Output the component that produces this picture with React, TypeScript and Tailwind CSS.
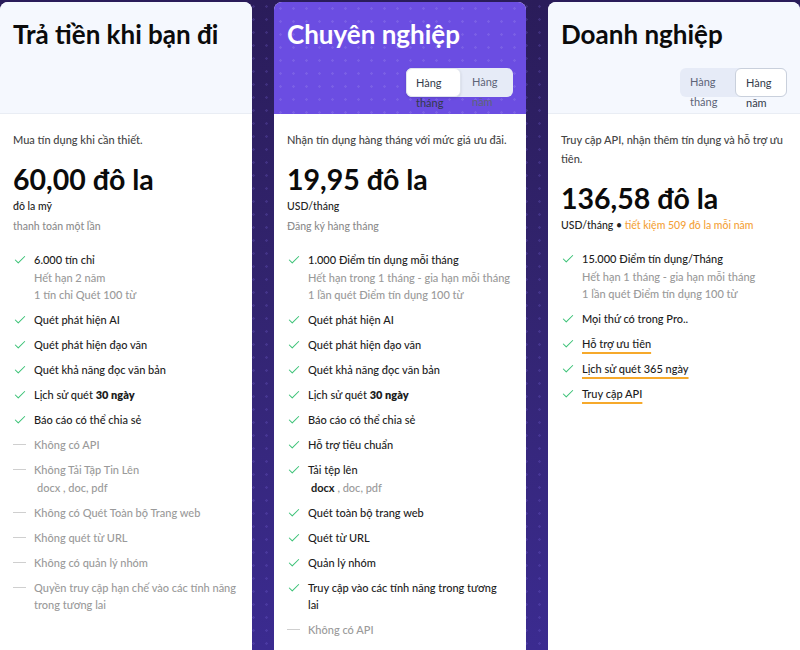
import React from 'react';
import { Check } from 'lucide-react';

type Item = {
  ok: boolean;
  text: React.ReactNode;
  sub?: React.ReactNode[];
  mark?: boolean;
  narrow?: boolean;
};

const font = { fontFamily: 'Lato, "Noto Sans", sans-serif' };

const Toggle: React.FC<{ active: 'month' | 'year' }> = ({ active }) => (
  <div className="flex justify-end mt-[18px]">
    <div className="flex w-[107px] h-[29px] rounded-md bg-[#e6ebf7] text-[11px] leading-[20px]">
      <div
        className={
          active === 'month'
            ? 'w-[55px] h-full pl-[9px] pr-[8px] pt-[4px] rounded-md bg-white border border-[#dfe4ee] shadow-sm text-[#333a4a]'
            : 'w-[55px] h-full pl-[10px] pr-[8px] pt-[4px] text-[#5d6478]'
        }
      >
        Hàng tháng
      </div>
      <div
        className={
          active === 'year'
            ? 'flex-1 h-full pl-[10px] pr-[8px] pt-[4px] rounded-md bg-white border border-[#c9d0dc] text-[#333a4a]'
            : 'flex-1 h-full pl-[11px] pr-[8px] pt-[4px] text-[#5d6478]'
        }
      >
        Hàng năm
      </div>
    </div>
  </div>
);

const FeatureList: React.FC<{ items: Item[] }> = ({ items }) => (
  <ul className="flex flex-col gap-[7.5px] mt-[17px]">
    {items.map((item, i) => (
      <li key={i} className="flex gap-[7px]">
        {item.ok ? (
          <Check className="w-[14px] h-[14px] mt-[2px] shrink-0 text-[#3cc277]" strokeWidth={1.8} />
        ) : (
          <span className="w-[14px] h-[17px] shrink-0 flex items-center">
            <span className="block w-[13px] h-px bg-[#cfcfcf]" />
          </span>
        )}
        <div className={item.narrow ? 'text-[11px] leading-[17.5px] max-w-[196px]' : 'text-[11px] leading-[17.5px]'}>
          <div
            className={
              item.ok
                ? item.mark
                  ? 'text-[#1c1c1c] font-medium underline decoration-[#f6a92b] decoration-2 underline-offset-[4px]'
                  : 'text-[#1c1c1c] font-medium'
                : 'text-[#9a9a9a] font-medium'
            }
          >
            {item.text}
          </div>
          {item.sub?.map((s, j) => (
            <div key={j} className="text-[#9a9a9a] font-medium">
              {s}
            </div>
          ))}
        </div>
      </li>
    ))}
  </ul>
);

type CardProps = {
  title: string;
  featured?: boolean;
  toggle?: 'month' | 'year';
  desc: string;
  price: string;
  unit: React.ReactNode;
  note?: string;
  items: Item[];
};

const Card: React.FC<CardProps> = ({ title, featured, toggle, desc, price, unit, note, items }) => (
  <div className="w-[252px] shrink-0 rounded-t-lg bg-white overflow-hidden">
    <div
      className={
        featured
          ? 'h-[112px] px-[13px] pt-[16px] bg-[#6b4de2] bg-[image:radial-gradient(circle,rgba(255,255,255,0.1)_1px,transparent_1.5px)] bg-[length:13px_13px]'
          : 'h-[112px] px-[13px] pt-[16px] bg-[#f5f8fe] border-b border-[#e9edf4]'
      }
    >
      <h2
        className={
          featured
            ? 'text-[26px] leading-[32px] font-bold text-white'
            : 'text-[26px] leading-[32px] font-bold text-[#0b0b0b]'
        }
      >
        {title}
      </h2>
      {toggle && <Toggle active={toggle} />}
    </div>
    <div className="px-[13px] pt-[16px] pb-6">
      <p className="text-[11px] leading-[19px] font-medium text-[#444]">{desc}</p>
      <div className="mt-[14px] text-[28.5px] leading-[32px] font-bold text-[#0b0b0b]">{price}</div>
      <div className="mt-[3px] text-[10.5px] leading-[16px] font-medium text-[#222]">{unit}</div>
      {note && <div className="mt-[4px] text-[10.5px] leading-[16px] font-medium text-[#8c8c8c]">{note}</div>}
      <FeatureList items={items} />
    </div>
  </div>
);

const App: React.FC = () => {
  const payg: Item[] = [
    { ok: true, text: '6.000 tín chỉ', sub: ['Hết hạn 2 năm', '1 tín chỉ Quét 100 từ'] },
    { ok: true, text: 'Quét phát hiện AI' },
    { ok: true, text: 'Quét phát hiện đạo văn' },
    { ok: true, text: 'Quét khả năng đọc văn bản' },
    { ok: true, text: <>Lịch sử quét <b className="font-extrabold">30 ngày</b></> },
    { ok: true, text: 'Báo cáo có thể chia sẻ' },
    { ok: false, text: 'Không có API' },
    { ok: false, text: 'Không Tải Tập Tin Lên', sub: [<span className="pl-[3px]">docx , doc, pdf</span>] },
    { ok: false, text: 'Không có Quét Toàn bộ Trang web' },
    { ok: false, text: 'Không quét từ URL' },
    { ok: false, text: 'Không có quản lý nhóm' },
    { ok: false, text: 'Quyền truy cập hạn chế vào các tính năng trong tương lai' },
  ];

  const pro: Item[] = [
    {
      ok: true,
      text: '1.000 Điểm tín dụng mỗi tháng',
      sub: ['Hết hạn trong 1 tháng - gia hạn mỗi tháng', '1 lần quét Điểm tín dụng 100 từ'],
    },
    { ok: true, text: 'Quét phát hiện AI' },
    { ok: true, text: 'Quét phát hiện đạo văn' },
    { ok: true, text: 'Quét khả năng đọc văn bản' },
    { ok: true, text: <>Lịch sử quét <b className="font-extrabold">30 ngày</b></> },
    { ok: true, text: 'Báo cáo có thể chia sẻ' },
    { ok: true, text: 'Hỗ trợ tiêu chuẩn' },
    {
      ok: true,
      text: 'Tải tệp lên',
      sub: [
        <span className="pl-[3px]">
          <b className="font-bold text-[#1c1c1c]">docx</b> , doc, pdf
        </span>,
      ],
    },
    { ok: true, text: 'Quét toàn bộ trang web' },
    { ok: true, text: 'Quét từ URL' },
    { ok: true, text: 'Quản lý nhóm' },
    { ok: true, text: 'Truy cập vào các tính năng trong tương lai', narrow: true },
    { ok: false, text: 'Không có API' },
  ];

  const biz: Item[] = [
    {
      ok: true,
      text: '15.000 Điểm tín dụng/Tháng',
      sub: ['Hết hạn 1 tháng - gia hạn mỗi tháng', '1 lần quét Điểm tín dụng 100 từ'],
    },
    { ok: true, text: 'Mọi thứ có trong Pro..' },
    { ok: true, text: 'Hỗ trợ ưu tiên', mark: true },
    { ok: true, text: 'Lịch sử quét 365 ngày', mark: true },
    { ok: true, text: 'Truy cập API', mark: true },
  ];

  return (
    <div
      style={font}
      className="w-[800px] h-[650px] overflow-hidden pt-[2px] bg-[#2f2170] bg-[image:radial-gradient(circle,rgba(130,110,230,0.22)_1px,transparent_1.5px),linear-gradient(180deg,#2a1c5a_0%,#32246f_45%,#3b2b90_100%)] bg-[length:13px_13px,100%_100%]"
    >
      <div className="flex gap-[22px]">
        <Card
          title="Trả tiền khi bạn đi"
          desc="Mua tín dụng khi cần thiết."
          price="60,00 đô la"
          unit="đô la mỹ"
          note="thanh toán một lần"
          items={payg}
        />
        <Card
          title="Chuyên nghiệp"
          featured
          toggle="month"
          desc="Nhận tín dụng hàng tháng với mức giá ưu đãi."
          price="19,95 đô la"
          unit="USD/tháng"
          note="Đăng ký hàng tháng"
          items={pro}
        />
        <Card
          title="Doanh nghiệp"
          toggle="year"
          desc="Truy cập API, nhận thêm tín dụng và hỗ trợ ưu tiên."
          price="136,58 đô la"
          unit={
            <>
              USD/tháng • <span className="text-[#f4a23a]">tiết kiệm 509 đô la mỗi năm</span>
            </>
          }
          items={biz}
        />
      </div>
    </div>
  );
};

export default App;
